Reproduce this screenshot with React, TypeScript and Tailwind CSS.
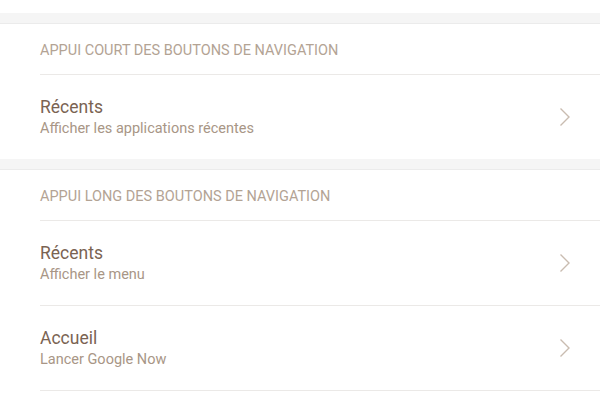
import React from "react";

function Chevron() {
  return (
    <svg width="12" height="20" viewBox="0 0 12 20" className="shrink-0">
      <path d="M1.5 1.5 L10 10 L1.5 18.5" fill="none" stroke="#c9bcb0" strokeWidth="1.4" />
    </svg>
  );
}

function Row({ title, subtitle, last }: { title: string; subtitle: string; last?: boolean }) {
  return (
    <div className={last ? "ml-10 flex h-[84px] items-center pr-[29px]" : "ml-10 flex h-[85px] items-center border-b border-[#ebe9e7] pr-[29px]"}>
      <div className="flex-1 pt-[1px]">
        <div className="text-[17.5px] leading-[22px] text-[#7a6352]">{title}</div>
        <div className="pt-[1px] text-[14.5px] leading-[20px] text-[#a89686]">{subtitle}</div>
      </div>
      <Chevron />
    </div>
  );
}

function Header({ text }: { text: string }) {
  return (
    <div className="ml-10 h-[51px] border-b border-[#ebe9e7] pt-[17px] text-[14.5px] leading-[20px] text-[#b3a394]">
      {text}
    </div>
  );
}

function Band() {
  return <div className="h-[11px] border-b border-[#ebebeb] bg-[#f5f5f5]" />;
}

export default function App() {
  return (
    <div className="h-[403px] w-[600px] overflow-hidden bg-white" style={{ fontFamily: "Roboto, 'Noto Sans', sans-serif" }}>
      <div className="h-[13px] bg-white" />
      <Band />
      <Header text="APPUI COURT DES BOUTONS DE NAVIGATION" />
      <Row title="Récents" subtitle="Afficher les applications récentes" last />
      <Band />
      <Header text="APPUI LONG DES BOUTONS DE NAVIGATION" />
      <Row title="Récents" subtitle="Afficher le menu" />
      <Row title="Accueil" subtitle="Lancer Google Now" />
    </div>
  );
}
